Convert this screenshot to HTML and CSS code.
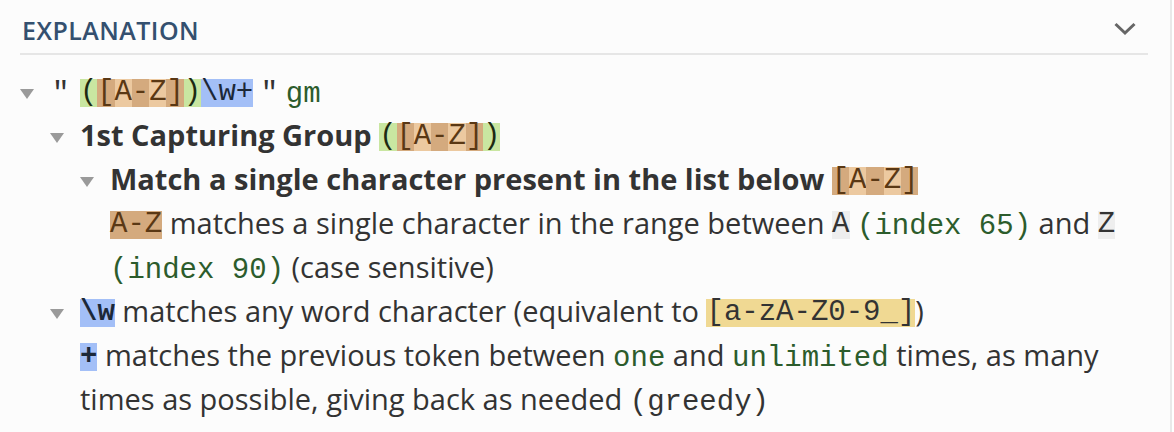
FILE: index.html
```html
<!DOCTYPE html>
<html>
<head>
<meta charset="utf-8">
<link rel="stylesheet" href="styles.css">
</head>
<body>
<div class="panel">
  <div class="header">
    <h2 class="title">EXPLANATION</h2>
    <svg class="chev" width="24" height="16" viewBox="0 0 24 16"><polyline points="2.5,3 12,12 21.5,3" fill="none" stroke="#666" stroke-width="3"/></svg>
  </div>
  <div class="tree">
    <div class="node">
      <div class="row">
        <span class="tog"><svg width="14" height="10" viewBox="0 0 14 10"><polygon points="0,0 14,0 7,10" fill="#9a9a9a"/></svg></span>
        <div class="content"><span class="m plain q1">"</span> <span class="c grp">(</span><span class="c cd">[</span><span class="c cl">A</span><span class="c cd">-</span><span class="c cl">Z</span><span class="c cd">]</span><span class="c grp">)</span><span class="run tok">\w+</span> <span class="m plain">"</span> <span class="m green">gm</span></div>
      </div>
      <div class="children">
        <div class="node">
          <div class="row">
            <span class="tog"><svg width="14" height="10" viewBox="0 0 14 10"><polygon points="0,0 14,0 7,10" fill="#9a9a9a"/></svg></span>
            <div class="content"><b>1st Capturing Group</b> <span class="c grp">(</span><span class="c cd">[</span><span class="c cl">A</span><span class="c cd">-</span><span class="c cl">Z</span><span class="c cd">]</span><span class="c grp">)</span></div>
          </div>
          <div class="children">
            <div class="node">
              <div class="row">
                <span class="tog"><svg width="14" height="10" viewBox="0 0 14 10"><polygon points="0,0 14,0 7,10" fill="#9a9a9a"/></svg></span>
                <div class="content"><b>Match a single character present in the list below</b> <span class="c cd">[</span><span class="c cl">A</span><span class="c cd">-</span><span class="c cl">Z</span><span class="c cd">]</span></div>
              </div>
              <div class="children">
                <p class="leaf"><span class="run cd">A-Z</span> matches a single character in the range between <span class="run lit">A</span> <span class="m green">(index 65)</span> and <span class="run lit">Z</span> <span class="m green">(index 90)</span> (case sensitive)</p>
              </div>
            </div>
          </div>
        </div>
        <div class="node">
          <div class="row">
            <span class="tog"><svg width="14" height="10" viewBox="0 0 14 10"><polygon points="0,0 14,0 7,10" fill="#9a9a9a"/></svg></span>
            <div class="content"><span class="run tok strong">\w</span> matches any word character (equivalent to <span class="run yel">[a-zA-Z0-9_]</span>)</div>
          </div>
          <div class="children">
            <p class="leaf"><span class="run tok strong">+</span> matches the previous token between <span class="m green">one</span> and <span class="m green">unlimited</span> times, as many times as possible, giving back as needed <span class="m plain">(greedy)</span></p>
          </div>
        </div>
      </div>
    </div>
  </div>
</div>
</body>
</html>
```
FILE: styles.css
```css
html, body {
  margin: 0;
  padding: 0;
  background: #ffffff;
}
.panel {
  width: 1172px;
  height: 432px;
  box-sizing: border-box;
  background: #fcfcfc;
  border-right: 2px solid #e9e9e9;
  padding: 14px 22px 0 20px;
  font-family: "Open Sans", sans-serif;
  color: #333333;
  overflow: hidden;
}
.header {
  display: flex;
  justify-content: space-between;
  align-items: center;
  padding: 0 11px 7px 2px;
  border-bottom: 2px solid #e6e6e6;
}
.title {
  margin: 0;
  font-size: 25px;
  line-height: 32px;
  font-weight: 600;
  color: #34506f;
  letter-spacing: 0.45px;
}
.chev {
  display: block;
  margin-top: -2px;
}
.tree {
  margin-top: 14px;
  font-size: 29px;
  line-height: 44px;
}
.row {
  display: flex;
  height: 44px;
}
.tog {
  flex: 0 0 30px;
  padding-top: 20px;
  height: 24px;
}
.tog svg {
  display: block;
}
.content {
  flex: 1;
  min-width: 0;
  white-space: nowrap;
}
.children {
  padding-left: 30px;
}
.leaf {
  margin: 0;
  line-height: 44px;
}
b {
  font-weight: 700;
  color: #333333;
}
.m, .c, .run {
  font-family: "Liberation Mono", "DejaVu Sans Mono", monospace;
  font-size: 29px;
  line-height: 28px;
}
.q1 {
  margin-left: 2px;
  margin-right: 3px;
}
.plain {
  color: #333333;
}
.green {
  color: #2c5c2c;
}
.c {
  display: inline-block;
  width: 17.3px;
  height: 28px;
  text-align: center;
  vertical-align: 2px;
}
.run {
  display: inline-block;
  height: 28px;
  vertical-align: 2px;
}
.grp {
  background: #c9e6a1;
  color: #1d2a12;
}
.cd {
  background: #d4aa7e;
  color: #5a3814;
}
.cl {
  background: #ecc9a0;
  color: #5a3814;
}
.tok {
  background: #a3bff7;
  color: #1c2838;
}
.strong {
  font-weight: 700;
}
.yel {
  background: #f0d993;
  color: #333333;
}
.lit {
  background: #eeeeee;
  color: #333333;
}
```
